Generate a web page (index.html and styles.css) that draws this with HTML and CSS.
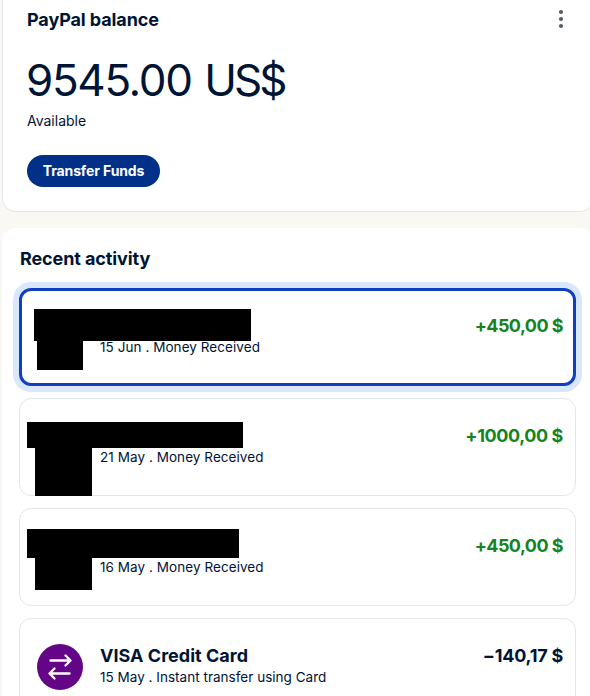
FILE: index.html
```html
<!DOCTYPE html>
<html lang="en">
<head>
    <meta charset="UTF-8">
    <meta name="viewport" content="width=device-width, initial-scale=1.0">
    <title>PayPal: Summary</title>
    <link rel="stylesheet" href="styles.css">
</head>
<body>
    <section class="card balance">
        <div class="balance-header">
            <h2>PayPal balance</h2>
            <svg class="menu-icon" width="6" height="20" viewBox="0 0 6 20">
                <circle cx="3" cy="3" r="2.1"/>
                <circle cx="3" cy="10" r="2.1"/>
                <circle cx="3" cy="17" r="2.1"/>
            </svg>
        </div>
        <div class="balance-amount">9545.00 <span class="currency">US$</span></div>
        <div class="balance-label">Available</div>
        <button class="transfer-btn">Transfer Funds</button>
    </section>

    <section class="card activity">
        <h2>Recent activity</h2>
        <ul class="activity-list">
            <li class="item selected">
                <div class="hidden-name name-1"></div>
                <div class="hidden-avatar avatar-1"></div>
                <div class="info">
                    <div class="name"></div>
                    <div class="details">15 Jun . Money Received</div>
                </div>
                <div class="amount received">+450,00 $</div>
            </li>
            <li class="item">
                <div class="hidden-name name-2"></div>
                <div class="hidden-avatar avatar-2"></div>
                <div class="info">
                    <div class="name"></div>
                    <div class="details">21 May . Money Received</div>
                </div>
                <div class="amount received wide">+1000,00 $</div>
            </li>
            <li class="item">
                <div class="hidden-name name-3"></div>
                <div class="hidden-avatar avatar-3"></div>
                <div class="info">
                    <div class="name"></div>
                    <div class="details">16 May . Money Received</div>
                </div>
                <div class="amount received">+450,00 $</div>
            </li>
            <li class="item">
                <svg class="transfer-icon" width="46" height="46" viewBox="0 0 46 46">
                    <circle cx="23" cy="23" r="23" fill="#640487"/>
                    <path d="M13.5 16.5H33M28.5 11.5L33.5 16.5L28.5 21.5M32.5 29.5H13M17.5 24.5L12.5 29.5L17.5 34.5" fill="none" stroke="#fff" stroke-width="2.4" stroke-linecap="round" stroke-linejoin="round"/>
                </svg>
                <div class="info">
                    <div class="name">VISA Credit Card</div>
                    <div class="details transfer">15 May . Instant transfer using Card</div>
                </div>
                <div class="amount spent">−140,17 $</div>
            </li>
        </ul>
    </section>
</body>
</html>
```
FILE: styles.css
```css
* { box-sizing: border-box; }
html { height: 100%; overflow: hidden; }
body { margin: 0; height: 696px; overflow: hidden; background: #faf8f5; color: #001435; font-family: Inter, "Liberation Sans", sans-serif; }
h2 { margin: 0; font-size: 18px; line-height: 24px; font-weight: 700; letter-spacing: -0.1px; }

.card { width: 592px; margin-left: 2px; background: #fff; }

/* balance */
.balance { height: 212px; padding: 8px 0 0 24px; border: 1px solid #e6e6e6; border-top: none; border-radius: 0 0 14px 14px; }
.balance-header { display: flex; justify-content: space-between; height: 24px; padding-right: 29px; }
.menu-icon { margin-top: 1px; fill: #545d68; }
.balance-amount { margin-top: 20px; margin-left: -1px; font-size: 44px; line-height: 56px; letter-spacing: -1.35px; word-spacing: 1.5px; white-space: nowrap; }
.currency { letter-spacing: -3px; }
.balance-label { margin-top: 3px; font-size: 14px; line-height: 20px; }
.transfer-btn { display: block; width: 133px; height: 32px; margin-top: 24px; padding: 0 0 1px; border: none; border-radius: 16px; background: #003087; color: #fff; font-family: inherit; font-size: 14px; font-weight: 700; letter-spacing: -0.12px; white-space: nowrap; }

/* recent activity */
.activity { margin-top: 16px; height: 480px; padding: 19px 0 0 18px; border-radius: 14px; }
.activity-list { display: flex; flex-direction: column; gap: 12px; width: 557px; margin: 17px 0 0 -1px; padding: 0; list-style: none; }
.item { position: relative; display: flex; height: 98px; flex-shrink: 0; padding: 25px 12px 0 17px; border: 1px solid #e6e6e6; border-radius: 12px; background: #fff; }
.item.selected { padding: 23px 10px 0 15px; border: 3px solid #1040c1; box-shadow: 0 0 0 6px #d9e7fc; }
.info { margin-left: 17px; white-space: nowrap; }
.item:not(:last-child) .info { margin-left: 63px; }
.name { height: 24px; font-size: 18px; line-height: 24px; font-weight: 700; letter-spacing: 0.02px; }
.details { font-size: 13.5px; line-height: 19px; letter-spacing: 0.06px; }
.details.transfer { letter-spacing: 0.02px; }
.amount { margin-left: auto; font-size: 18px; line-height: 24px; font-weight: 700; letter-spacing: -0.55px; white-space: nowrap; }
.amount.received { color: #15831f; }
.amount.wide { letter-spacing: -0.4px; }
.amount.spent { letter-spacing: -0.25px; }

/* black bars laid over the sender name and picture */
.hidden-name, .hidden-avatar { position: absolute; background: #000; }
.name-1 { left: 12px; top: 18px; width: 217px; height: 32px; }
.avatar-1 { left: 15px; top: 48px; width: 46px; height: 31px; }
.name-2 { left: 7px; top: 23px; width: 216px; height: 26px; }
.avatar-2 { left: 15px; top: 48px; width: 57px; height: 49px; }
.name-3 { left: 7px; top: 20px; width: 212px; height: 29px; }
.avatar-3 { left: 15px; top: 48px; width: 57px; height: 33px; }
```
